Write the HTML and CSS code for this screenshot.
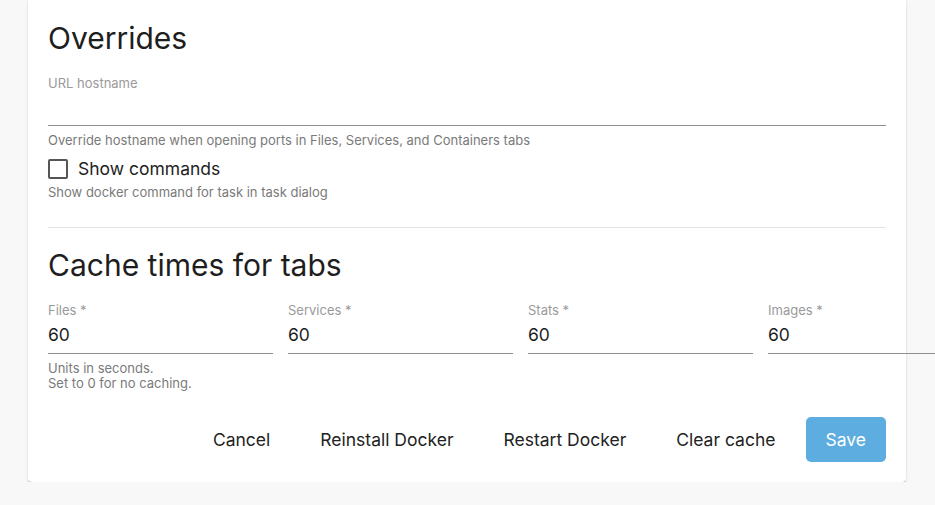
FILE: index.html
```html
<!DOCTYPE html>
<html lang="en">
<head>
<meta charset="utf-8">
<title>Settings</title>
<link rel="stylesheet" href="styles.css">
</head>
<body>
<div class="card">
  <h2 class="title">Overrides</h2>
  <div class="field field-full">
    <label class="label">URL hostname</label>
    <div class="input"></div>
    <div class="helper">Override hostname when opening ports in Files, Services, and Containers tabs</div>
  </div>
  <label class="check-row">
    <span class="checkbox"></span>
    <span class="check-label">Show commands</span>
  </label>
  <div class="helper helper-check">Show docker command for task in task dialog</div>
  <hr class="divider">
  <h2 class="title title-second">Cache times for tabs</h2>
  <div class="fields">
    <div class="field">
      <label class="label">Files *</label>
      <div class="input value">60</div>
      <div class="helper helper-units">Units in seconds.<br>Set to 0 for no caching.</div>
    </div>
    <div class="field">
      <label class="label">Services *</label>
      <div class="input value">60</div>
    </div>
    <div class="field">
      <label class="label">Stats *</label>
      <div class="input value">60</div>
    </div>
    <div class="field">
      <label class="label">Images *</label>
      <div class="input value">60</div>
    </div>
  </div>
  <div class="actions">
    <button class="btn">Cancel</button>
    <button class="btn">Reinstall Docker</button>
    <button class="btn">Restart Docker</button>
    <button class="btn">Clear cache</button>
    <button class="btn btn-primary">Save</button>
  </div>
</div>
</body>
</html>
```
FILE: styles.css
```css
html, body {
  margin: 0;
  padding: 0;
}
body {
  background: #f8f8f8;
  font-family: Inter, "Noto Sans", sans-serif;
  color: #222;
  overflow-x: hidden;
}
.card {
  margin-left: 28px;
  width: 878px;
  box-sizing: border-box;
  background: #fff;
  padding: 19px 20px 20px;
  border-radius: 0 0 4px 4px;
  box-shadow: 0 2px 1px -1px rgba(0,0,0,.2), 0 1px 1px 0 rgba(0,0,0,.14), 0 1px 3px 0 rgba(0,0,0,.12);
}
.title {
  margin: 0;
  font-size: 30px;
  line-height: 38px;
  font-weight: 400;
  color: #1e1e1e;
}
.title-second {
  margin-top: 18px;
}
.field-full {
  margin-top: 18px;
}
.label {
  display: block;
  font-size: 13px;
  line-height: 16px;
  color: #9a9a9a;
}
.input {
  height: 35px;
  border-bottom: 1px solid #8f8f8f;
  box-sizing: border-box;
}
.helper {
  font-size: 13px;
  line-height: 16px;
  color: #7a7a7a;
  margin-top: 6px;
}
.check-row {
  display: flex;
  align-items: center;
  gap: 10px;
  margin-top: 10px;
  height: 22px;
}
.checkbox {
  width: 16px;
  height: 16px;
  border: 2px solid #555;
  border-radius: 2px;
}
.check-label {
  font-size: 17.5px;
  line-height: 22px;
  color: #1e1e1e;
}
.helper-check {
  margin-top: 4px;
}
.divider {
  margin: 27px 0 0;
  border: 0;
  border-top: 1px solid #e2e2e2;
  height: 0;
}
.fields {
  display: flex;
  gap: 15px;
  margin-top: 18px;
}
.fields .field {
  flex: 0 0 225px;
}
.value {
  height: 36px;
  font-size: 17.5px;
  line-height: 34px;
  color: #1e1e1e;
}
.helper-units {
  line-height: 15px;
  margin-top: 7px;
}
.actions {
  display: flex;
  justify-content: flex-end;
  gap: 10px;
  margin-top: 26px;
}
.btn {
  font-family: Inter, "Noto Sans", sans-serif;
  font-size: 17.5px;
  height: 45px;
  padding: 0 20px;
  border: 0;
  background: transparent;
  color: #222;
  border-radius: 5px;
}
.btn-primary {
  background: #5eade0;
  color: #fff;
}
```
